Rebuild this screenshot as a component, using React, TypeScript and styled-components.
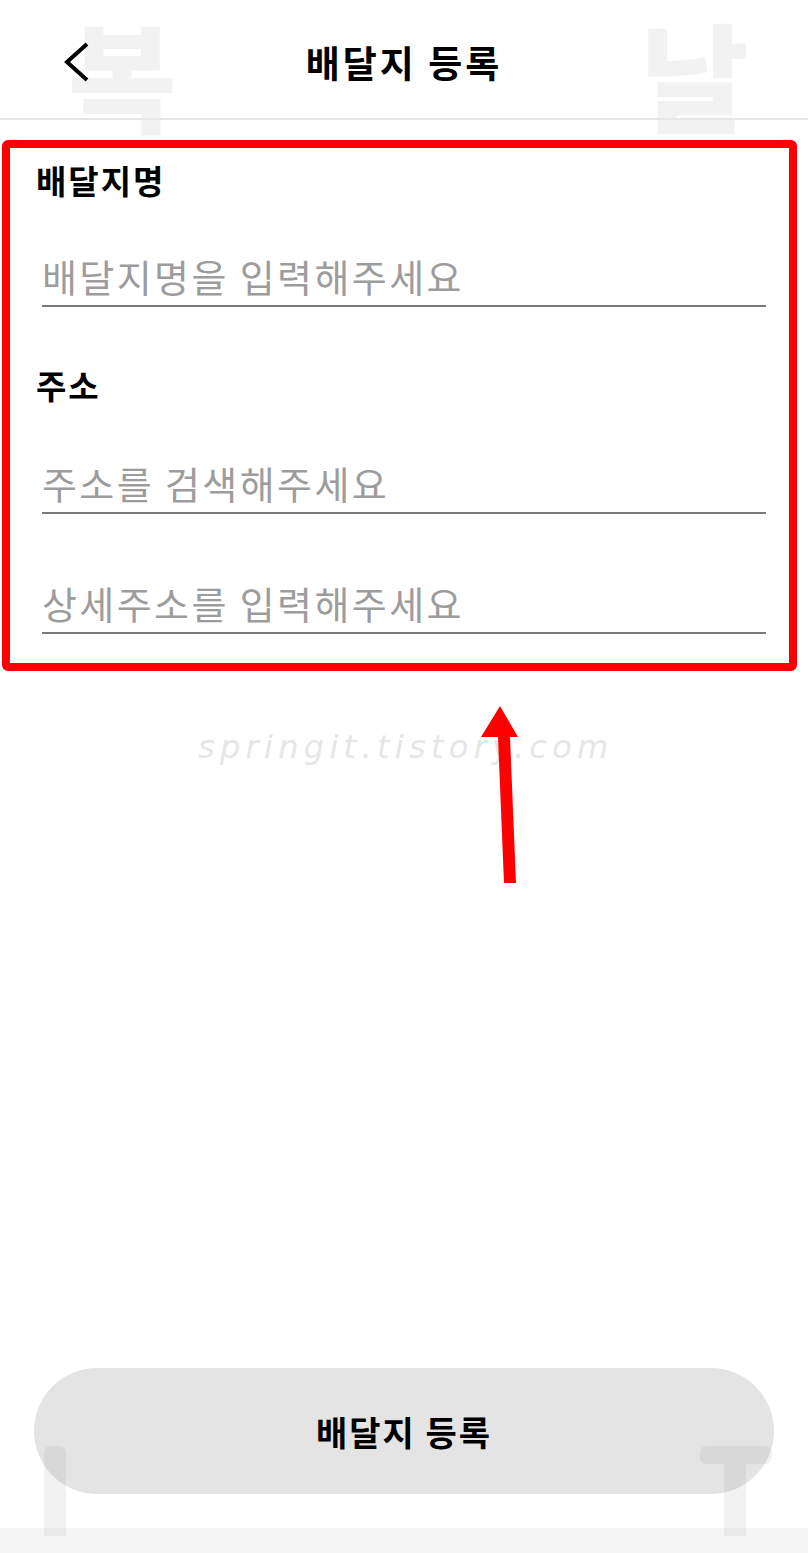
import styled, { createGlobalStyle } from "styled-components";

const GlobalStyle = createGlobalStyle`
  html, body {
    margin: 0;
    padding: 0;
    background: #ffffff;
  }
  body {
    font-family: "Noto Sans CJK KR", "Noto Sans", sans-serif;
  }
`;

const App = () => {
  return (
    <>
      <GlobalStyle />
      <Page>
        <BigMark $left={68} $top={14}>복</BigMark>
        <BigMark $left={640} $top={14}>날</BigMark>
        <BarMark $left={44} />
        <TeeMark />

        <Header>
          <BackButton aria-label="back">
            <svg width="30" height="42" viewBox="0 0 30 42">
              <polyline
                points="25,3 5,21 25,39"
                fill="none"
                stroke="#000"
                strokeWidth="4"
                strokeLinejoin="miter"
              />
            </svg>
          </BackButton>
          <Title>배달지 등록</Title>
          <span />
        </Header>

        <Form>
          <Label>배달지명</Label>
          <Field $top={45}>
            <Input placeholder="배달지명을 입력해주세요" />
          </Field>

          <Label $top={58}>주소</Label>
          <Field $top={47}>
            <Input placeholder="주소를 검색해주세요" />
          </Field>
          <Field $top={58}>
            <Input placeholder="상세주소를 입력해주세요" />
          </Field>
        </Form>

        <Watermark>springit.tistory.com</Watermark>
        <Arrow width="60" height="190" viewBox="0 0 60 190">
          <polygon points="20,0 38,31 30,31 36,177 24,177 18,31 1,31" fill="#ff0000" />
        </Arrow>

        <Spacer />
        <SubmitButton>배달지 등록</SubmitButton>
        <BottomBar />
      </Page>
    </>
  );
};

export default App;

const Page = styled.div`
  position: relative;
  width: 808px;
  min-height: 1553px;
  display: flex;
  flex-direction: column;
  overflow: hidden;
`;

const BigMark = styled.div<{ $left: number; $top: number }>`
  position: absolute;
  left: ${(p) => p.$left}px;
  top: ${(p) => p.$top}px;
  font-size: 118px;
  font-weight: 900;
  line-height: 1;
  color: rgba(0, 0, 0, 0.05);
  pointer-events: none;
`;

const BarMark = styled.div<{ $left: number }>`
  position: absolute;
  left: ${(p) => p.$left}px;
  top: 1446px;
  width: 22px;
  height: 90px;
  border-radius: 6px 6px 0 0;
  background: rgba(0, 0, 0, 0.05);
  z-index: 2;
  pointer-events: none;
`;

const TeeMark = styled.div`
  position: absolute;
  left: 700px;
  top: 1446px;
  width: 72px;
  height: 90px;
  z-index: 2;
  pointer-events: none;

  &::before {
    content: "";
    position: absolute;
    left: 0;
    top: 0;
    width: 72px;
    height: 18px;
    border-radius: 6px;
    background: rgba(0, 0, 0, 0.05);
  }

  &::after {
    content: "";
    position: absolute;
    left: 24px;
    top: 18px;
    width: 22px;
    height: 72px;
    background: rgba(0, 0, 0, 0.05);
  }
`;

const Header = styled.header`
  position: relative;
  height: 112px;
  padding-top: 6px;
  display: grid;
  grid-template-columns: 120px 1fr 120px;
  align-items: center;
  border-bottom: 2px solid #e6e6e6;
`;

const BackButton = styled.button`
  margin-left: 62px;
  width: 30px;
  height: 42px;
  padding: 0;
  border: none;
  background: none;
  display: flex;
  align-items: center;
`;

const Title = styled.h1`
  margin: 0;
  text-align: center;
  font-size: 37px;
  font-weight: 700;
  color: #000;
  letter-spacing: 3px;
`;

const Form = styled.div`
  position: relative;
  margin: 20px 11px 0 2px;
  padding: 12px 23px 29px 26px;
  border: 8px solid #ff0000;
  border-radius: 6px;
  display: flex;
  flex-direction: column;
`;

const Label = styled.div<{ $top?: number }>`
  margin-top: ${(p) => p.$top ?? 0}px;
  height: 40px;
  line-height: 40px;
  font-size: 33px;
  font-weight: 700;
  color: #000;
  letter-spacing: 2px;
`;

const Field = styled.div<{ $top: number }>`
  margin-top: ${(p) => p.$top}px;
  margin-left: 6px;
  border-bottom: 2px solid #7a7a7a;
`;

const Input = styled.input`
  display: block;
  width: 100%;
  height: 60px;
  padding: 0;
  border: none;
  outline: none;
  background: transparent;
  font-family: "Noto Sans CJK KR", "Noto Sans", sans-serif;
  font-size: 38px;
  font-weight: 400;
  letter-spacing: 2.4px;
  color: #000;

  &::placeholder {
    color: #9c9c9c;
  }
`;

const Watermark = styled.div`
  position: absolute;
  left: 198px;
  top: 728px;
  font-family: "DejaVu Sans", sans-serif;
  font-style: italic;
  font-weight: 300;
  font-size: 32px;
  letter-spacing: 5.3px;
  color: #e6e6e6;
  pointer-events: none;
`;

const Arrow = styled.svg`
  position: absolute;
  left: 480px;
  top: 706px;
  z-index: 3;
`;

const Spacer = styled.div`
  flex: 1;
`;

const SubmitButton = styled.button`
  margin: 0 34px 34px;
  height: 126px;
  border: none;
  border-radius: 63px;
  background: #e4e4e4;
  font-family: "Noto Sans CJK KR", "Noto Sans", sans-serif;
  font-size: 34px;
  font-weight: 700;
  color: #000;
  letter-spacing: 2px;
`;

const BottomBar = styled.div`
  height: 25px;
  background: #f5f5f5;
`;
